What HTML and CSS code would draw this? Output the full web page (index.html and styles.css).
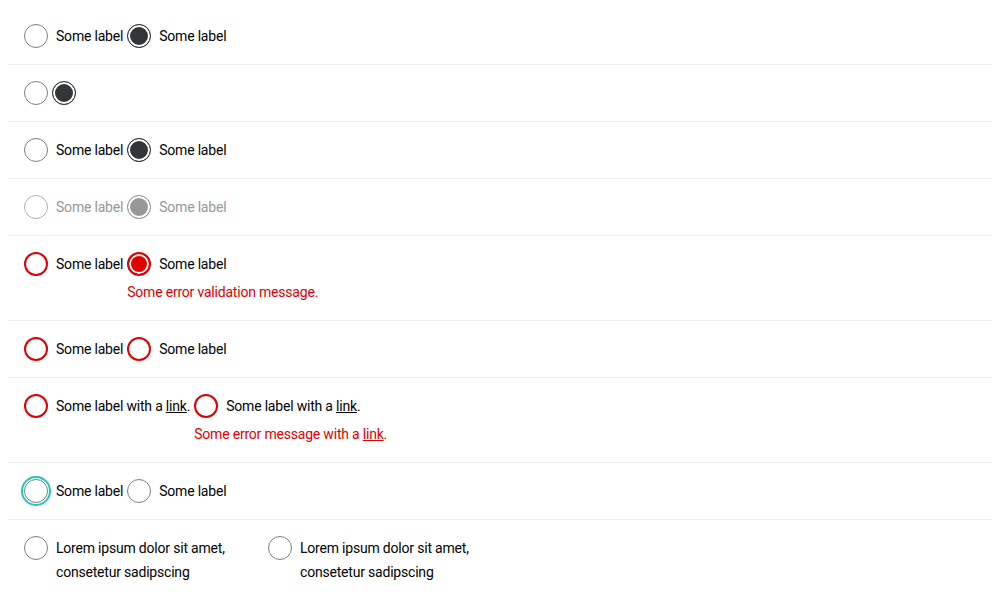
FILE: index.html
```html
<!DOCTYPE html>
<html lang="en">
<head>
<meta charset="utf-8">
<title>Radio buttons</title>
<link rel="stylesheet" href="styles.css">
</head>
<body>
  <div class="row">
    <label class="item"><span class="radio"></span><span class="text">Some label</span></label>
    <label class="item"><span class="radio checked"></span><span class="text">Some label</span></label>
  </div>
  <div class="row">
    <label class="item"><span class="radio"></span></label>
    <label class="item"><span class="radio checked"></span></label>
  </div>
  <div class="row">
    <label class="item"><span class="radio"></span><span class="text">Some label</span></label>
    <label class="item"><span class="radio checked"></span><span class="text">Some label</span></label>
  </div>
  <div class="row disabled">
    <label class="item"><span class="radio"></span><span class="text">Some label</span></label>
    <label class="item"><span class="radio checked"></span><span class="text">Some label</span></label>
  </div>
  <div class="row error">
    <label class="item"><span class="radio"></span><span class="text">Some label</span></label>
    <div class="group">
      <label class="item"><span class="radio checked"></span><span class="text">Some label</span></label>
      <p class="message">Some error validation message.</p>
    </div>
  </div>
  <div class="row error">
    <label class="item"><span class="radio"></span><span class="text">Some label</span></label>
    <label class="item"><span class="radio"></span><span class="text">Some label</span></label>
  </div>
  <div class="row error">
    <label class="item"><span class="radio"></span><span class="text">Some label with a <a href="#">link</a>.</span></label>
    <div class="group">
      <label class="item"><span class="radio"></span><span class="text">Some label with a <a href="#">link</a>.</span></label>
      <p class="message">Some error message with a <a href="#">link</a>.</p>
    </div>
  </div>
  <div class="row">
    <label class="item"><span class="radio focus"></span><span class="text">Some label</span></label>
    <label class="item"><span class="radio"></span><span class="text">Some label</span></label>
  </div>
  <div class="row last">
    <label class="item wide"><span class="radio"></span><span class="text">Lorem ipsum dolor sit amet, consetetur sadipscing</span></label>
    <label class="item wide"><span class="radio"></span><span class="text">Lorem ipsum dolor sit amet, consetetur sadipscing</span></label>
  </div>
</body>
</html>
```
FILE: styles.css
```css
body {
  margin: 8px;
  background: #fff;
  font-family: Roboto, "Liberation Sans", sans-serif;
  font-size: 14px;
  line-height: 24px;
  letter-spacing: -0.2px;
  color: #010205;
}

.row {
  display: flex;
  align-items: flex-start;
  gap: 4px;
  padding: 16px;
  border-bottom: 1px solid #eeeff2;
}

.row.last {
  border-bottom: none;
}

.item {
  display: flex;
  align-items: flex-start;
  gap: 8px;
}

.item.wide {
  width: 240px;
}

.radio {
  flex: none;
  box-sizing: border-box;
  width: 24px;
  height: 24px;
  border-radius: 50%;
  border: 1px solid #7c7f81;
  background: #fff;
}

.radio.checked {
  border-color: #323639;
  background: #323639;
  box-shadow: inset 0 0 0 2px #fff;
}

.radio.focus {
  outline: 2px solid #1ec9b4;
  outline-offset: 1px;
}

.text a,
.message a {
  color: inherit;
  text-decoration: underline;
}

.disabled .text {
  color: #96989a;
}

.disabled .radio {
  border-color: #b0b1b2;
}

.disabled .radio.checked {
  border-color: #96989a;
  background: #96989a;
}

.error .radio {
  border: 2px solid #e00000;
}

.error .radio.checked {
  background: #e00000;
  box-shadow: inset 0 0 0 2px #fff;
}

.group {
  display: flex;
  flex-direction: column;
}

.message {
  margin: 4px 0 0;
  color: #e00000;
}
```
